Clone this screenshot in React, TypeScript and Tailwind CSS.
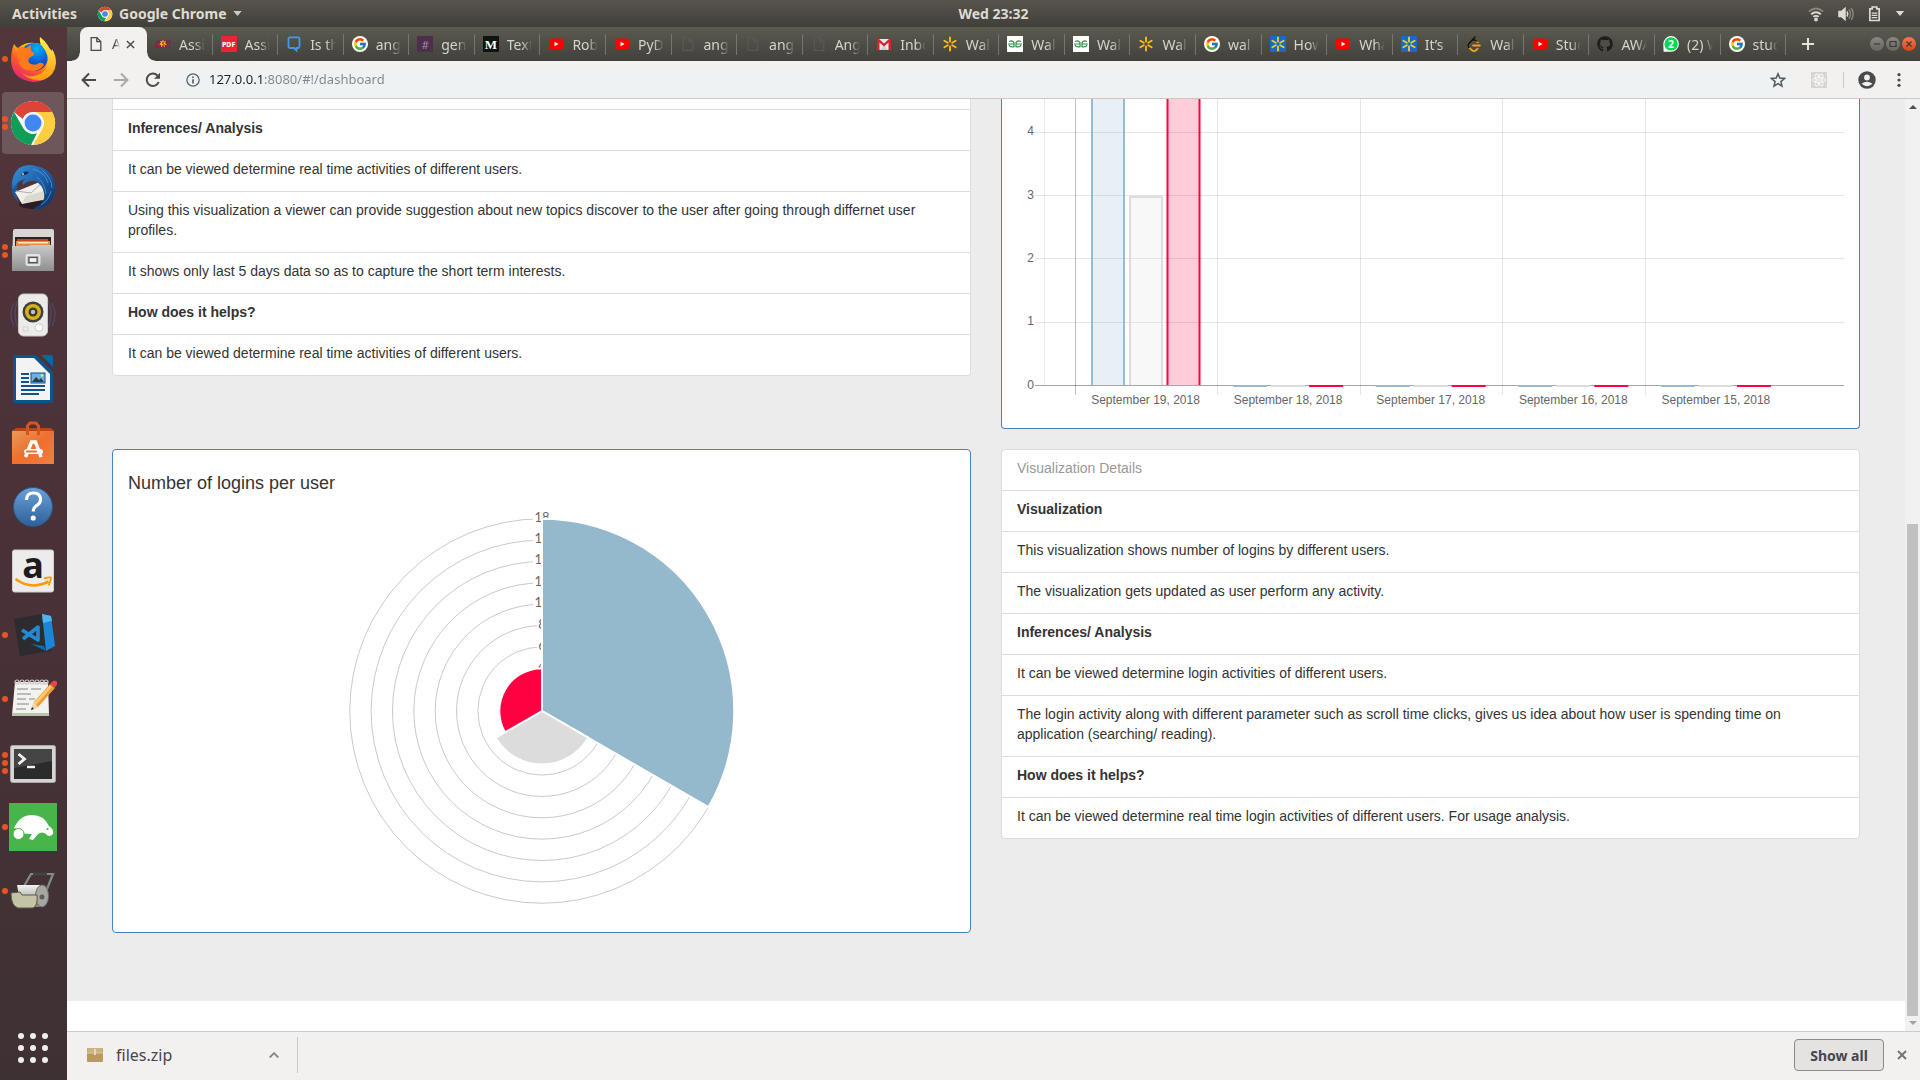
import React from "react";
import { FaGithub } from "react-icons/fa";
import { FcGoogle } from "react-icons/fc";
import { SiLeetcode } from "react-icons/si";

/* ---------- Tab favicons ---------- */

const PageIcon = ({ color }: { color: string }) => (
  <svg viewBox="0 0 16 16" className="size-4 shrink-0" fill="none" stroke={color} strokeWidth="1.3">
    <path d="M3.2 1.6h5.6l4 4v8.8H3.2z" />
    <path d="M8.8 1.6v4h4" />
  </svg>
);

const AsuIcon = () => (
  <svg viewBox="0 0 16 16" className="size-4 shrink-0">
    <path d="M1.500 4.500h14l-1 7H0z" fill="#8c1d40" />
    <path d="M8 3.500l.9 2.200 2.300-.7-1.200 2.100 2 1.400-2.300.4.200 2.400L8 9.800l-1.900 1.500.2-2.400L4 8.500l2-1.400L4.800 5l2.300.7z" fill="#ffc627" />
    <path d="M9.300 6.500H7.500v1.400h1.600v1.500H7.200" stroke="#8c1d40" strokeWidth=".8" fill="none" />
    <path d="M2 10l1-3.500h1V10M12 6.500V10h1.500V6.500" stroke="#5b5648" strokeWidth=".7" fill="none" />
  </svg>
);

const PdfIcon = () => (
  <span className="flex size-4 shrink-0 items-center justify-center rounded-[1px] bg-[#ee2233] text-[7px] leading-none font-extrabold text-white">PDF</span>
);

const ChatIcon = () => (
  <svg viewBox="0 0 16 16" className="size-4 shrink-0" fill="none" stroke="#3d9be9" strokeWidth="1.8">
    <path d="M4 1.400h8q1.500 0 1.500 1.500v7.600q0 1.500-1.500 1.500h-1.500v2.500L8 12H4q-1.500 0-1.500-1.500V2.900Q2.500 1.400 4 1.400z" />
  </svg>
);

const GIcon = () => (
  <span className="flex size-4 shrink-0 items-center justify-center rounded-full bg-white">
    <FcGoogle className="size-[14px]" />
  </span>
);

const HashIcon = () => (
  <span className="flex size-4 shrink-0 items-center justify-center bg-[#4d2f4c] text-[11px] leading-none text-[#a78da6]">#</span>
);

const MediumIcon = () => (
  <span className="flex size-4 shrink-0 items-center justify-center bg-[#121212] font-['Liberation_Serif',serif] text-[13px] leading-none font-bold text-white">M</span>
);

const YtIcon = () => (
  <svg viewBox="0 0 16 16" className="size-4 shrink-0">
    <rect x="1" y="2.500" width="14" height="11" rx="2.500" fill="#f00" />
    <path d="M6.500 5.700v4.600l4-2.300z" fill="#fff" />
  </svg>
);

const GmailIcon = () => (
  <svg viewBox="0 0 16 16" className="size-4 shrink-0">
    <path d="M1 3h14v11H1z" fill="#e9e9e9" />
    <path d="M4 14l4-4.500L12 14z" fill="#cfcfcf" />
    <path d="M1 14V2.500h1.500L8 7.500l5.500-5H15V14h-2.500V6.500L8 10.500l-4.500-4V14z" fill="#d5232b" />
  </svg>
);

const SparkIcon = ({ boxed }: { boxed?: boolean }) => (
  <svg viewBox="0 0 16 16" className="size-4 shrink-0">
    {boxed && <rect width="16" height="16" fill="#1a68c7" />}
    {[0, 60, 120, 180, 240, 300].map((a) => (
      <path key={a} d="M8 1.500v4" stroke={boxed ? "#d9d42c" : "#fdbb16"} strokeWidth="1.900" strokeLinecap="round" transform={`rotate(${a} 8 8)`} />
    ))}
  </svg>
);

const GfgIcon = () => (
  <svg viewBox="0 0 16 16" className="size-4 shrink-0">
    <rect width="16" height="16" fill="#fff" />
    <g fill="none" stroke="#2f8d46" strokeWidth="1.200">
      <path d="M2 5.500q4-1.500 5 1.200v4Q3 11.500 2 9M1 8h6" />
      <path d="M14 5.500q-4-1.500-5 1.200v4Q13 11.500 14 9M15 8H9" />
    </g>
  </svg>
);

const WhatsIcon = () => (
  <svg viewBox="0 0 16 16" className="size-4 shrink-0">
    <path d="M.6 15.700L.3 8A7.800 7.800 0 1 1 8 15.700z" fill="#fff" />
    <circle cx="8.100" cy="7.900" r="6.700" fill="#06d755" />
    <text x="8" y="11.800" textAnchor="middle" fontSize="10.500" fontWeight="700" fill="#fff">2</text>
  </svg>
);

const LeetIcon = () => (
  <span className="relative size-4 shrink-0">
    <SiLeetcode className="size-4 text-[#f0a01c]" />
    <SiLeetcode className="absolute inset-0 size-4 text-[#111] [clip-path:polygon(0_0,100%_0,100%_35%,45%_35%,20%_75%,0_75%)]" />
  </span>
);

const GithubIcon = () => <FaGithub className="size-4 shrink-0 text-[#1f1e1c]" />;

const tabs: { icon: React.ReactNode; title: string }[] = [
  { icon: <AsuIcon />, title: "Assi" },
  { icon: <PdfIcon />, title: "Assi" },
  { icon: <ChatIcon />, title: "Is th" },
  { icon: <GIcon />, title: "ang" },
  { icon: <HashIcon />, title: "gen" },
  { icon: <MediumIcon />, title: "Text" },
  { icon: <YtIcon />, title: "Rob" },
  { icon: <YtIcon />, title: "PyD" },
  { icon: <PageIcon color="#57575a" />, title: "ang" },
  { icon: <PageIcon color="#57575a" />, title: "ang" },
  { icon: <PageIcon color="#57575a" />, title: "Ang" },
  { icon: <GmailIcon />, title: "Inbo" },
  { icon: <SparkIcon />, title: "Wal" },
  { icon: <GfgIcon />, title: "Wal" },
  { icon: <GfgIcon />, title: "Wal" },
  { icon: <SparkIcon />, title: "Wal" },
  { icon: <GIcon />, title: "wal" },
  { icon: <SparkIcon boxed />, title: "How" },
  { icon: <YtIcon />, title: "Wha" },
  { icon: <SparkIcon boxed />, title: "It’s" },
  { icon: <LeetIcon />, title: "Wal" },
  { icon: <YtIcon />, title: "Stud" },
  { icon: <GithubIcon />, title: "AWA" },
  { icon: <WhatsIcon />, title: "(2) W" },
  { icon: <GIcon />, title: "stud" },
];

/* ---------- Dock icons ---------- */

const ChromeLogo = ({ className }: { className: string }) => (
  <svg viewBox="0 0 48 48" className={className}>
    <circle cx="24" cy="24" r="22" fill="#fff" />
    <path d="M24 2a22 22 0 0 1 19.100 11H24a11 11 0 0 0-10.300 7L5 13A22 22 0 0 1 24 2z" fill="#db4437" />
    <path d="M43.100 13A22 22 0 0 1 24 46l9.500-16.500A11 11 0 0 0 24 13z" fill="#ffcd40" />
    <path d="M5 13l9.500 16.500A11 11 0 0 0 28 34.200L22 46A22 22 0 0 1 5 13z" fill="#0f9d58" />
    <circle cx="24" cy="24" r="10.500" fill="#f1f1f1" />
    <circle cx="24" cy="24" r="8.400" fill="#4285f4" />
  </svg>
);

const Firefox = () => (
  <svg viewBox="0 0 48 48" className="size-12">
    <defs>
      <linearGradient id="ffBody" x1=".85" y1="0" x2=".15" y2="1">
        <stop offset="0" stopColor="#fff44f" />
        <stop offset=".35" stopColor="#ffb01e" />
        <stop offset=".6" stopColor="#ff5b27" />
        <stop offset="1" stopColor="#e31587" />
      </linearGradient>
      <radialGradient id="ffGlobe" cx=".6" cy=".2" r=".9">
        <stop offset="0" stopColor="#00b3f4" />
        <stop offset=".5" stopColor="#0a62dc" />
        <stop offset="1" stopColor="#3a1e8c" />
      </radialGradient>
      <linearGradient id="ffTail" x1=".5" y1="0" x2=".5" y2="1">
        <stop offset="0" stopColor="#fff44f" />
        <stop offset="1" stopColor="#ff980e" />
      </linearGradient>
    </defs>
    <path d="M5 9q2 3 4 4 7-6 17-5 18 2 20 16 1 21-21 23Q3 45 2 26 2 16 5 9z" fill="url(#ffBody)" />
    <circle cx="25" cy="22" r="14" fill="url(#ffGlobe)" />
    <path d="M9 13q5-2 8 0l5-3q-1 5 1 7 3 1 2 3l-5 3q-2 4 2 6 5 2 8-1 4-1 5 2-4 6-12 6Q10 35 9 24z" fill="#ff7a1c" />
    <path d="M31 2q-1 5 2 9 8 9 5 20-3 8-13 10-8 1-13-4 9 10 22 8 12-4 13-17 0-8-4-14 0 3-1 4-2-9-11-16z" fill="url(#ffTail)" />
  </svg>
);

const Thunderbird = () => (
  <svg viewBox="0 0 48 48" className="size-12">
    <defs>
      <linearGradient id="tbBlue" x1="0" y1="0" x2="1" y2="1">
        <stop offset="0" stopColor="#3b8fd8" />
        <stop offset=".5" stopColor="#1d5fa8" />
        <stop offset="1" stopColor="#0a2a5e" />
      </linearGradient>
    </defs>
    <ellipse cx="23" cy="41" rx="13" ry="5" fill="#1d1418" opacity=".7" />
    <path d="M3 16Q0 30 9 39q-3-10 0-18z" fill="#1c5a9e" />
    <path d="M6 29l27-11 5 18-25 5z" fill="#f1efe9" />
    <path d="M7 28l15 2 12-11" fill="none" stroke="#b5b0a5" strokeWidth="1" />
    <path d="M13 40l25-4-3-8-18 5z" fill="#dcd9d1" />
    <path d="M10 5q8-5 17-2 16 3 19 18 2 17-14 25-6 1-7-1 12-5 10-15-1-8-9-12-6-1-12 4-2-4 3-6-8 1-13 10Q1 13 10 5z" fill="url(#tbBlue)" />
    <path d="M24 6q12 3 15 14M28 14q8 6 9 17M34 8q9 8 9 17M42 28q-2 9-10 14" fill="none" stroke="#5fb0ea" strokeWidth="1" opacity=".6" />
    <path d="M12 12q3-5 8-3-3 4-8 3z" fill="#0b2e63" />
    <circle cx="14" cy="11" r="1" fill="#e8d060" />
  </svg>
);

const Files = () => (
  <svg viewBox="0 0 48 48" className="size-12">
    <defs>
      <linearGradient id="fiG" x1="0" y1="0" x2="0" y2="1">
        <stop offset="0" stopColor="#c9c9c9" />
        <stop offset="1" stopColor="#8f8f8f" />
      </linearGradient>
    </defs>
    <path d="M4 4q0-2 2-2h37q2 0 2 2v39H3z" fill="#d6d6d6" />
    <rect x="6" y="10" width="36" height="12" fill="#2b2523" />
    <rect x="8" y="12" width="31" height="4" fill="#c34b13" />
    <rect x="7" y="14" width="34" height="6" fill="#f08a3a" />
    <rect x="9" y="15" width="30" height="1.500" fill="#ffe3c4" />
    <path d="M3 19h17l2-1h23v26H3z" fill="url(#fiG)" />
    <rect x="17.500" y="28" width="13" height="10" rx="1.500" fill="none" stroke="#e4e4e4" strokeWidth="2" />
    <rect x="20" y="30.500" width="8" height="5" fill="#f4f4f4" stroke="#555" strokeWidth="1.200" />
  </svg>
);

const Rhythmbox = () => (
  <svg viewBox="0 0 48 48" className="size-12">
    <g fill="none" stroke="#4f5f8c" strokeWidth="1.500" opacity=".45">
      <path d="M5 12q-6 11 0 23M9 9q-6 13 0 28M43 12q6 11 0 23M39 9q6 13 0 28" />
    </g>
    <rect x="9.500" y="3" width="29" height="42" rx="5" fill="#ebebe9" stroke="#c9c7c3" />
    <circle cx="24" cy="21" r="10.500" fill="#3f3f3d" />
    <circle cx="24" cy="21" r="8" fill="#d6b21c" />
    <circle cx="24" cy="21" r="4.500" fill="#3f3a1e" />
    <circle cx="24" cy="21" r="2.200" fill="#b5c3cc" />
    <circle cx="30" cy="36.500" r="3.800" fill="#fff" stroke="#cfcdca" />
    <rect x="14" y="36" width="5" height="4" fill="none" stroke="#d2d0cc" strokeWidth=".8" />
  </svg>
);

const Writer = () => (
  <svg viewBox="0 0 48 48" className="size-12">
    <path d="M4 2q0-2 2-2h21l17 17v29q0 2-2 2H6q-2 0-2-2z" fill="#0c548b" />
    <path d="M32 0h10q2 0 2 2v10z" fill="#0369a3" />
    <path d="M7 3h18l16 16v26H7z" fill="#f3f3f3" />
    <path d="M12 19h8M12 23h8M12 27h8M12 31h24M12 35h24M12 39h18" stroke="#0c548b" strokeWidth="2" />
    <rect x="22" y="18" width="14" height="10" fill="#6db1e0" stroke="#0c548b" />
    <path d="M23 27l4-5 3 3 2-2 3 4z" fill="#26404f" />
    <circle cx="33" cy="20.500" r="1.200" fill="#ffe47a" />
  </svg>
);

const Software = () => (
  <svg viewBox="0 0 48 48" className="size-12">
    <defs>
      <linearGradient id="swG" x1="0" y1="0" x2="1" y2="1">
        <stop offset="0" stopColor="#e89a5a" />
        <stop offset=".5" stopColor="#ee6f2d" />
        <stop offset="1" stopColor="#f07f45" />
      </linearGradient>
    </defs>
    <path d="M3 12l4-3h35l3 3z" fill="#b8461b" />
    <rect x="3" y="12" width="42" height="33" fill="url(#swG)" />
    <path d="M18.500 16V7l2.500-3h6l2.500 3v9" fill="none" stroke="#d9531e" strokeWidth="3" />
    <path d="M16.500 38l6-15h4L32 38" fill="none" stroke="#fff" strokeWidth="3.500" />
    <rect x="15" y="30" width="19" height="5" rx="2.500" fill="#fff" />
    <rect x="17" y="31.500" width="11" height="2" rx="1" fill="#ee6f2d" />
  </svg>
);

const Help = () => (
  <svg viewBox="0 0 48 48" className="size-12">
    <defs>
      <linearGradient id="hpG" x1="0" y1="0" x2="0" y2="1">
        <stop offset="0" stopColor="#6aa0d8" />
        <stop offset="1" stopColor="#2d6099" />
      </linearGradient>
    </defs>
    <circle cx="24" cy="24" r="19.500" fill="url(#hpG)" stroke="#2a5687" />
    <path d="M17.500 17q0-7 7-7t7 6.500q0 4-4.500 6.500-2.700 1.800-2.700 5.500" fill="none" stroke="#fff" strokeWidth="3.200" />
    <circle cx="24.200" cy="35" r="2.600" fill="#fff" />
  </svg>
);

const Amazon = () => (
  <svg viewBox="0 0 48 48" className="size-12">
    <rect x="3.500" y="3" width="41" height="42" rx="2" fill="#ececec" stroke="#cfcfcf" />
    <text x="24" y="31" textAnchor="middle" fontSize="36" fontWeight="700" fill="#1c1c1c">a</text>
    <path d="M6.500 32q16 11.500 33 2.500" fill="none" stroke="#f90" strokeWidth="2.600" />
    <path d="M35 31.500q7-2 7-.5t-2.500 7.500" fill="none" stroke="#f90" strokeWidth="1.900" />
  </svg>
);

const VsCode = () => (
  <svg viewBox="0 0 48 48" className="size-12">
    <path d="M5 8l29-5 8 37-31 5z" fill="#2c2b2d" />
    <path d="M33 3l9 2 4 30-9 5z" fill="#1b86d4" />
    <path d="M33 3l9 2 1 5-9 2z" fill="#4fb2f2" />
    <path d="M22 33l13 2 2 5z" fill="#0f6cb3" />
    <path d="M13 19l16 10V16L14 28" fill="none" stroke="#2489d2" strokeWidth="3.600" strokeLinejoin="round" />
  </svg>
);

const Gedit = () => (
  <svg viewBox="0 0 48 48" className="size-12">
    <path d="M6 7h33l1 33H3z" fill="#f2f2ee" />
    <path d="M3 38h37l.2 3H3z" fill="#b7c7a6" />
    {[8, 13, 18, 23, 28, 33, 37].map((x) => (
      <circle key={x} cx={x} cy="7" r="2" fill="none" stroke="#c9c9c9" strokeWidth="1.200" />
    ))}
    <path d="M8 14h11M22 14h10M8 19h14M8 24h9M20 24h6M8 29h12M7 34h10" stroke="#aaa" strokeWidth="1.300" />
    <path d="M22 35l3-8L41 9l5 4-17 19z" fill="#f29a2e" />
    <path d="M24 29L41 10l2 2-17 19z" fill="#ffc876" />
    <path d="M41 9l3-3q3-1 4 1t-1 4l-1.500 2z" fill="#dd4a48" />
    <path d="M22 35l3-8 4 5z" fill="#ecd8b0" />
    <path d="M22 35l1-3 2 2z" fill="#222" />
  </svg>
);

const Terminal = () => (
  <svg viewBox="0 0 48 48" className="size-12">
    <rect x="1.500" y="6.500" width="45" height="37" rx="2" fill="#d5d5d3" stroke="#a9a9a7" />
    <rect x="5" y="10" width="38" height="30" fill="#2b2b2b" />
    <path d="M5 10h38v12L5 29z" fill="#454545" />
    <path d="M9.500 15l6 5-6 5" fill="none" stroke="#f2f2f2" strokeWidth="2.800" />
    <path d="M18 28h8" stroke="#f2f2f2" strokeWidth="2.400" />
  </svg>
);

const Manatee = () => (
  <svg viewBox="0 0 48 48" className="size-12">
    <rect width="48" height="48" fill="#47b549" />
    <path d="M5 25q6-13 18-13 12 0 17 11 5 3 4 8-4 4-7 0-4-3-8 0l-5 6-4-1 3-5-10-.5q-4-5-8-5.500z" fill="#fff" />
    <circle cx="9.500" cy="31" r="5.500" fill="#fff" stroke="#47b549" />
    <circle cx="38.500" cy="26" r="1" fill="#47b549" />
  </svg>
);

const Roller = () => (
  <svg viewBox="0 0 48 48" className="size-12">
    <defs>
      <linearGradient id="roG" x1="0" y1="0" x2="0" y2="1">
        <stop offset="0" stopColor="#f3f3f1" />
        <stop offset="1" stopColor="#85857d" />
      </linearGradient>
    </defs>
    <path d="M14 21l8-14h22L36 27" fill="none" stroke="#7f8f84" strokeWidth="2.200" />
    <path d="M24 7h14" stroke="#3f4743" strokeWidth="3" />
    <path d="M8 18h27q5 4 4 12-1 9-6 10H12z" fill="url(#roG)" />
    <ellipse cx="33" cy="29" rx="6.500" ry="11" fill="#a6a6a2" stroke="#6b6b68" />
    <circle cx="33" cy="30" r="2.500" fill="#5d5d5a" />
    <path d="M2 26l9-1 2 3h15q1 11-4 13H9q-7-2-7-15z" fill="#c4c4a4" stroke="#5b5b4a" />
  </svg>
);

const dock: { name: string; dots: number; icon: React.ReactNode; active?: boolean }[] = [
  { name: "Firefox", dots: 1, icon: <Firefox /> },
  { name: "Google Chrome", dots: 2, icon: <ChromeLogo className="size-12" />, active: true },
  { name: "Thunderbird", dots: 0, icon: <Thunderbird /> },
  { name: "Files", dots: 2, icon: <Files /> },
  { name: "Rhythmbox", dots: 0, icon: <Rhythmbox /> },
  { name: "Writer", dots: 0, icon: <Writer /> },
  { name: "Software", dots: 0, icon: <Software /> },
  { name: "Help", dots: 0, icon: <Help /> },
  { name: "Amazon", dots: 0, icon: <Amazon /> },
  { name: "Code", dots: 1, icon: <VsCode /> },
  { name: "Text Editor", dots: 1, icon: <Gedit /> },
  { name: "Terminal", dots: 3, icon: <Terminal /> },
  { name: "Robo 3T", dots: 1, icon: <Manatee /> },
  { name: "Roller", dots: 1, icon: <Roller /> },
];

const Dock = () => (
  <nav aria-label="Dock" className="flex w-[67px] shrink-0 flex-col items-center bg-linear-to-b from-[#51363a] via-[#4a3138] to-[#3e3134] pr-px">
    {dock.map((d) => (
      <button key={d.name} aria-label={d.name} className="relative flex h-16 w-full items-center justify-center">
        <span className={d.active ? "flex size-[62px] items-center justify-center rounded-[4px] bg-[#6d575a]" : "flex size-[62px] items-center justify-center"}>
          {d.icon}
        </span>
        <span className="absolute inset-y-0 left-[2px] flex flex-col justify-center gap-[2px]">
          {Array.from({ length: d.dots }, (_, i) => (
            <span key={i} className="size-[6px] rounded-full bg-[#e95420]" />
          ))}
        </span>
      </button>
    ))}
    <button aria-label="Show applications" className="mt-auto mb-[17px] grid grid-cols-3 gap-[6px]">
      {Array.from({ length: 9 }, (_, i) => (
        <span key={i} className="size-[6px] rounded-full bg-[#f0efee]" />
      ))}
    </button>
  </nav>
);

/* ---------- Desktop top bar ---------- */

const TopBar = () => (
  <header className="grid h-[27px] shrink-0 grid-cols-[67px_1fr_auto_1fr] items-center bg-linear-to-b from-[#58544c] to-[#403f3a] text-[14px] font-bold text-[#dfdbd2]">
    <div className="col-span-2 flex items-center pl-3">
      <button>Activities</button>
      <button className="ml-5 flex items-center gap-[6px]">
        <ChromeLogo className="size-4" />
        Google Chrome
        <svg viewBox="0 0 10 6" className="h-[5px] w-[9px]"><path d="M0 0h10L5 6z" fill="#cfcbc3" /></svg>
      </button>
    </div>
    <button>Wed 23:32</button>
    <div className="flex items-center justify-end gap-[14px] pr-[15px]">
      <svg viewBox="0 0 16 16" className="size-4" fill="none" stroke="#dfdbd2" strokeWidth="1.800">
        <path d="M1 5.500q7-6 14 0" opacity=".4" />
        <path d="M3.200 8.200q4.800-4 9.600 0M5.300 10.800q2.700-2 5.400 0" />
        <circle cx="8" cy="13.500" r="1" fill="#dfdbd2" />
      </svg>
      <svg viewBox="0 0 16 16" className="size-4" fill="none" stroke="#dfdbd2" strokeWidth="1.500">
        <path d="M1 5.500h2.500L7 2.500v11L3.500 10.500H1z" fill="#dfdbd2" />
        <path d="M9 5.500q1.500 2.500 0 5" />
        <path d="M11 3.500q3 4.500 0 9M13.200 2q4 6 0 12" opacity=".4" />
      </svg>
      <svg viewBox="0 0 14 18" className="h-[17px] w-[13px]" fill="none" stroke="#dfdbd2" strokeWidth="1.800">
        <path d="M2 4h2.500V2h5v2H12v12.500H2z" />
        <path d="M4 8.500h6M4 11h6M4 13.500h6" strokeWidth="1.300" />
      </svg>
      <svg viewBox="0 0 10 6" className="h-[5px] w-[10px]"><path d="M0 0h10L5 6z" fill="#dfdbd2" /></svg>
    </div>
  </header>
);

/* ---------- Browser chrome ---------- */

const WindowButton = ({ label, close, children }: { label: string; close?: boolean; children: React.ReactNode }) => (
  <button
    aria-label={label}
    className={close ? "size-[14px] rounded-full bg-linear-to-b from-[#f37950] to-[#df3f11]" : "size-[14px] rounded-full bg-linear-to-b from-[#888780] to-[#66655f]"}
  >
    <svg viewBox="0 0 14 14" fill="none" stroke="#3a3935" strokeWidth="1.200">{children}</svg>
  </button>
);

const TabStrip = () => (
  <div className="flex h-[34px] shrink-0 bg-linear-to-b from-[#5b5b50] to-[#41403b] pl-[13px]">
    <div className="relative flex w-[67px] shrink-0 items-center rounded-t-[8px] bg-[#f2f1f0] pl-2">
      <span className="absolute bottom-0 -left-[8px] size-[8px] bg-[radial-gradient(circle_at_0_0,transparent_7px,#f2f1f0_8px)]" />
      <span className="absolute -right-[8px] bottom-0 size-[8px] bg-[radial-gradient(circle_at_100%_0,transparent_7px,#f2f1f0_8px)]" />
      <PageIcon color="#4a4a4a" />
      <span className="ml-2 w-2 overflow-hidden text-[14px] leading-5 whitespace-nowrap text-[#4a4a4a] [mask-image:linear-gradient(90deg,#000_40%,transparent)]">A</span>
      <button aria-label="Close tab" className="ml-[6px]">
        <svg viewBox="0 0 10 10" className="size-[9px]" stroke="#4a4a4a" strokeWidth="1.600"><path d="M1 1l8 8M9 1L1 9" /></svg>
      </button>
    </div>
    <div className="flex min-w-0 flex-1 items-center">
      {tabs.map((t, i) => (
        <button key={i} className="flex h-[21px] min-w-0 flex-1 items-center gap-2 border-r border-[#77756c] pr-[7px] pl-2">
          {t.icon}
          <span className="min-w-0 flex-1 overflow-hidden text-left text-[14px] leading-[19px] whitespace-nowrap text-[#d6d3ca] [mask-image:linear-gradient(90deg,#000_60%,transparent)]">{t.title}</span>
        </button>
      ))}
    </div>
    <div className="flex w-[134px] shrink-0 items-center">
      <button aria-label="New tab" className="ml-4">
        <svg viewBox="0 0 12 12" className="size-3" stroke="#e6e3da" strokeWidth="2"><path d="M6 0v12M0 6h12" /></svg>
      </button>
      <div className="mr-1 ml-auto flex gap-[2px]">
        <WindowButton label="Minimize"><path d="M4 7h6" /></WindowButton>
        <WindowButton label="Maximize"><path d="M4 4.500h6v5H4z" /></WindowButton>
        <WindowButton label="Close" close><path d="M4.500 4.500l5 5M9.500 4.500l-5 5" /></WindowButton>
      </div>
    </div>
  </div>
);

const Toolbar = () => (
  <div className="flex h-[38px] shrink-0 items-center border-b border-[#cbc9c8] bg-[#f2f1f0] pl-[14px]">
    <div className="flex gap-4">
      <button aria-label="Back">
        <svg viewBox="0 0 16 16" className="size-4" fill="none" stroke="#4a4a4a" strokeWidth="2"><path d="M15 8H2M8 1.500L1.600 8 8 14.500" /></svg>
      </button>
      <button aria-label="Forward">
        <svg viewBox="0 0 16 16" className="size-4" fill="none" stroke="#a9a8a7" strokeWidth="2"><path d="M1 8h13M8 1.500L14.400 8 8 14.500" /></svg>
      </button>
      <button aria-label="Reload">
        <svg viewBox="0 0 16 16" className="size-4" fill="none" stroke="#4a4a4a" strokeWidth="2">
          <path d="M13.700 10A6.200 6.200 0 1 1 12.500 3.600" />
          <path d="M15 .8v6H9z" fill="#4a4a4a" stroke="none" />
        </svg>
      </button>
    </div>
    <div className="ml-4 flex h-7 min-w-0 flex-1 items-center rounded-full bg-[#eef2f3] px-[9px]">
      <svg viewBox="0 0 16 16" className="size-[14px] shrink-0" fill="none" stroke="#5f6368" strokeWidth="1.500">
        <circle cx="8" cy="8" r="7" />
        <path d="M8 7v5M8 4v1.800" strokeWidth="2" />
      </svg>
      <input
        aria-label="Address"
        defaultValue="127.0.0.1:8080/#!/dashboard"
        className="mt-px ml-[9px] min-w-0 flex-1 bg-[linear-gradient(90deg,#202124_56px,#80868b_56px)] bg-clip-text text-[13px] text-transparent outline-none"
      />
      <button aria-label="Bookmark">
        <svg viewBox="0 0 16 16" className="size-4" fill="none" stroke="#55585c" strokeWidth="1.500">
          <path d="M8 1.800l1.800 4.300 4.700.400-3.600 3.100 1.100 4.600L8 11.700l-4 2.500 1.100-4.600L1.500 6.500l4.700-.400z" />
        </svg>
      </button>
    </div>
    <div className="ml-4 flex items-center">
      <button aria-label="React extension" className="bg-[#d6d5d4]">
        <svg viewBox="0 0 16 16" className="size-4" fill="none" stroke="#f8f8f8" strokeWidth="1">
          <ellipse cx="8" cy="8" rx="6.500" ry="2.600" />
          <ellipse cx="8" cy="8" rx="6.500" ry="2.600" transform="rotate(60 8 8)" />
          <ellipse cx="8" cy="8" rx="6.500" ry="2.600" transform="rotate(120 8 8)" />
          <circle cx="8" cy="8" r="1" />
        </svg>
      </button>
      <span className="mx-4 h-4 w-px bg-[#c9c8c7]" />
      <button aria-label="Profile" className="-ml-[2px]">
        <svg viewBox="0 0 18 18" className="size-[18px]">
          <circle cx="9" cy="9" r="8.700" fill="#4a4a4a" />
          <circle cx="9" cy="6.500" r="2.900" fill="#f2f1f0" />
          <path d="M3.500 12.800Q9 8.500 14.500 12.800 9 17.500 3.500 12.800z" fill="#f2f1f0" />
        </svg>
      </button>
      <button aria-label="Menu" className="mr-[13px] ml-[15px]">
        <svg viewBox="0 0 16 16" className="size-4" fill="#4a4a4a"><circle cx="8" cy="2.700" r="1.600" /><circle cx="8" cy="8" r="1.600" /><circle cx="8" cy="13.300" r="1.600" /></svg>
      </button>
    </div>
  </div>
);

/* ---------- Dashboard ---------- */

type Row = { text: string; kind?: "bold" | "muted" };

const ListRows = ({ rows }: { rows: Row[] }) => (
  <>
    {rows.map((r, i) => (
      <li key={i} className="border-t border-[#dddddd] px-[15px] pt-2 pb-3 first:border-t-0">
        {r.kind === "bold" ? <strong>{r.text}</strong> : <span className={r.kind === "muted" ? "text-[#999999]" : ""}>{r.text}</span>}
      </li>
    ))}
  </>
);

const activityRows: Row[] = [
  { text: "Inferences/ Analysis", kind: "bold" },
  { text: "It can be viewed determine real time activities of different users." },
  { text: "Using this visualization a viewer can provide suggestion about new topics discover to the user after going through differnet user profiles." },
  { text: "It shows only last 5 days data so as to capture the short term interests." },
  { text: "How does it helps?", kind: "bold" },
  { text: "It can be viewed determine real time activities of different users." },
];

const loginRows: Row[] = [
  { text: "Visualization Details", kind: "muted" },
  { text: "Visualization", kind: "bold" },
  { text: "This visualization shows number of logins by different users." },
  { text: "The visualization gets updated as user perform any activity." },
  { text: "Inferences/ Analysis", kind: "bold" },
  { text: "It can be viewed determine login activities of different users." },
  { text: "The login activity along with different parameter such as scroll time clicks, gives us idea about how user is spending time on application (searching/ reading)." },
  { text: "How does it helps?", kind: "bold" },
  { text: "It can be viewed determine real time login activities of different users. For usage analysis." },
];

const days = ["September 19, 2018", "September 18, 2018", "September 17, 2018", "September 16, 2018", "September 15, 2018"];
const STEP = 142.6;
const ZERO_Y = 286.5;
const UNIT = 63.3;

const BarChart = () => (
  <svg viewBox="0 0 827 314" className="block w-full" role="img" aria-label="Activity per day">
    {[0, 1, 2, 3, 4].map((v) => (
      <g key={v}>
        <path d={`M18 ${Math.floor(ZERO_Y - v * UNIT) + 0.5}H827`} stroke="#000" strokeOpacity={v ? 0.1 : 0.35} />
        <text x="17" y={ZERO_Y - v * UNIT + 3} textAnchor="end" fontSize="12" fill="#666">{v}</text>
      </g>
    ))}
    <path d="M27.500 0V286" stroke="#000" strokeOpacity=".08" />
    {days.map((day, i) => (
      <g key={day}>
        <path d={`M${Math.floor(58 + i * STEP) + 0.5} 0V296`} stroke="#000" strokeOpacity={i ? 0.1 : 0.25} />
        <text x={128.500 + i * STEP} y="305" textAnchor="middle" fontSize="12" fill="#666">{day}</text>
        {i > 0 && (
          <g>
            <rect x={73.500 + i * STEP} y="286" width="34" height="2" fill="#97bbcd" />
            <rect x={111.500 + i * STEP} y="286" width="34" height="2" fill="#dcdcdc" />
            <rect x={149.500 + i * STEP} y="286" width="34" height="2" fill="#ff0040" />
          </g>
        )}
      </g>
    ))}
    <rect x="76" y="0" width="30" height="286" fill="#97b8d8" fillOpacity=".22" />
    <path d="M75 0V286M107 0V286" stroke="#97bbcd" strokeWidth="2" />
    <path d="M113 286V98H145V286" fill="#dcdcdc" fillOpacity=".2" stroke="#dcdcdc" strokeWidth="2" />
    <rect x="151" y="0" width="31" height="286" fill="#ff0040" fillOpacity=".2" />
    <path d="M150.500 0V286M182.500 0V286" stroke="#ff0040" strokeWidth="2" />
  </svg>
);

const CX = 414;
const CY = 206;
const RING = 10.68;

const sector = (value: number, from: number, to: number) => {
  const r = value * RING;
  const point = (deg: number) => {
    const a = (deg * Math.PI) / 180;
    return `${CX + r * Math.cos(a)} ${CY + r * Math.sin(a)}`;
  };
  return `M${CX} ${CY}L${point(from)}A${r} ${r} 0 0 1 ${point(to)}z`;
};

const PolarChart = () => (
  <svg viewBox="0 0 827 412" className="block w-full" role="img" aria-label="Number of logins per user">
    {[2, 4, 6, 8, 10, 12, 14, 16, 18].map((v) => (
      <circle key={v} cx={CX} cy={CY} r={v * RING} fill="none" stroke="#000" strokeOpacity=".21" />
    ))}
    {[4, 6, 8, 10, 12, 14, 16, 18].map((v) => (
      <g key={v}>
        <rect x={v > 9 ? CX - 9 : CX - 5} y={CY - v * RING - 8} width={v > 9 ? 18 : 10} height="16" fill="#fff" />
        <text x={CX} y={CY - v * RING + 3} textAnchor="middle" fontSize="13" fill="#666" className="font-['Lato',sans-serif]">{v}</text>
      </g>
    ))}
    <g stroke="#fff" strokeWidth="2">
      <path d={sector(18, -90, 30)} fill="#94b8cc" />
      <path d={sector(5, 30, 150)} fill="#dcdcdc" />
      <path d={sector(4, 150, 270)} fill="#ff0040" />
    </g>
  </svg>
);

const Dashboard = () => (
  <main className="min-w-0 flex-1 overflow-hidden bg-white font-['Liberation_Sans',Arial,sans-serif] text-[14px] leading-5 text-[#333333]">
    <div className="grid grid-cols-2 items-start gap-x-[30px] gap-y-5 bg-[#ececec] px-[45px] pb-[68px]">
      <div className="rounded-b-[4px] border border-t-0 border-[#dddddd] bg-white pt-[10px]">
        <ul className="border-t border-[#dddddd]">
          <ListRows rows={activityRows} />
        </ul>
      </div>
      <div className="rounded-b-[4px] border border-t-0 border-[#4580c9] bg-white px-[15px] pb-[15px]">
        <BarChart />
      </div>
      <div className="rounded-[4px] border border-[#4580c9] bg-white p-[15px]">
        <h4 className="mt-2 mb-3 text-[18px] leading-5 font-normal">Number of logins per user</h4>
        <PolarChart />
      </div>
      <ul className="rounded-[4px] border border-[#dddddd] bg-white">
        <ListRows rows={loginRows} />
      </ul>
    </div>
  </main>
);

const Scrollbar = () => (
  <div className="flex w-[15px] shrink-0 flex-col items-center bg-[#f1f1f1]">
    <svg viewBox="0 0 8 4" className="mt-[6px] h-1 w-2"><path d="M0 4h8L4 0z" fill="#505050" /></svg>
    <span className="flex-[415]" />
    <span className="w-[11px] flex-[492] bg-[#c1c1c1]" />
    <svg viewBox="0 0 8 4" className="mt-[5px] mb-[6px] h-1 w-2"><path d="M0 0h8L4 4z" fill="#a3a3a3" /></svg>
  </div>
);

const DownloadBar = () => (
  <footer className="flex h-[49px] shrink-0 items-center border-t border-[#cdcccb] bg-[#f2f1f0] pr-[13px] pb-[2px] pl-5 text-[#46464e]">
    <button className="flex w-[182px] items-center text-[16px]">
      <svg viewBox="0 0 16 14" className="h-[14px] w-4">
        <rect width="16" height="14" rx="1" fill="#b89a60" />
        <path d="M1 0h14l1 5H0z" fill="#cdb182" />
        <path d="M0 5h16" stroke="#e3cfa6" strokeWidth=".8" />
        <rect x="7" y="1" width="2" height="6" fill="#ead9b5" />
      </svg>
      <span className="ml-[13px]">files.zip</span>
    </button>
    <button aria-label="Download options">
      <svg viewBox="0 0 10 6" className="h-[6px] w-[10px]" fill="none" stroke="#858483" strokeWidth="1.800"><path d="M.7 5.500L5 1.200l4.300 4.300" /></svg>
    </button>
    <span className="ml-[18px] h-9 w-px bg-[#c9c8c7]" />
    <button className="ml-auto h-8 w-[90px] rounded-[4px] border border-[#8b8a88] bg-[#e4e3e1] text-[14px] font-bold">Show all</button>
    <button aria-label="Close downloads" className="ml-[13px]">
      <svg viewBox="0 0 10 10" className="size-[10px]" stroke="#757473" strokeWidth="1.900"><path d="M1 1l8 8M9 1L1 9" /></svg>
    </button>
  </footer>
);

export default function App() {
  return (
    <div className="flex h-screen flex-col overflow-hidden font-['Noto_Sans','Open_Sans',sans-serif]">
      <TopBar />
      <div className="flex min-h-0 flex-1">
        <Dock />
        <div className="flex min-w-0 flex-1 flex-col">
          <TabStrip />
          <Toolbar />
          <div className="flex min-h-0 flex-1">
            <Dashboard />
            <Scrollbar />
          </div>
          <DownloadBar />
        </div>
      </div>
    </div>
  );
}
